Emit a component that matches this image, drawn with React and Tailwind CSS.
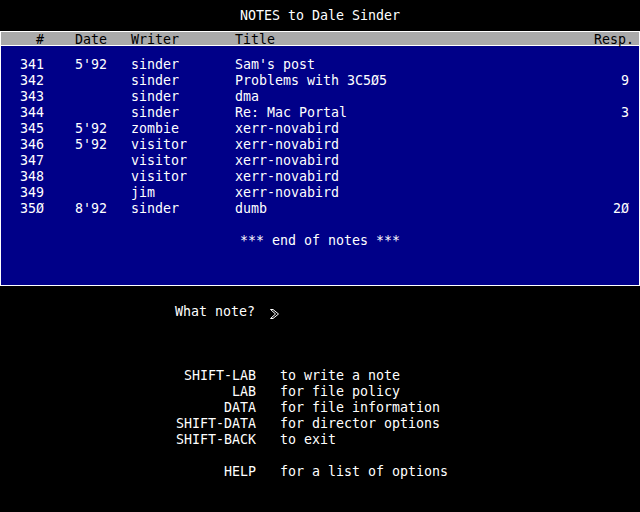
const notes = [
  { num: '341', date: "5'92", writer: 'sinder', title: "Sam's post", resp: '' },
  { num: '342', date: '', writer: 'sinder', title: 'Problems with 3C5Ø5', resp: '9' },
  { num: '343', date: '', writer: 'sinder', title: 'dma', resp: '' },
  { num: '344', date: '', writer: 'sinder', title: 'Re: Mac Portal', resp: '3' },
  { num: '345', date: "5'92", writer: 'zombie', title: 'xerr-novabird', resp: '' },
  { num: '346', date: "5'92", writer: 'visitor', title: 'xerr-novabird', resp: '' },
  { num: '347', date: '', writer: 'visitor', title: 'xerr-novabird', resp: '' },
  { num: '348', date: '', writer: 'visitor', title: 'xerr-novabird', resp: '' },
  { num: '349', date: '', writer: 'jim', title: 'xerr-novabird', resp: '' },
  { num: '35Ø', date: "8'92", writer: 'sinder', title: 'dumb', resp: '2Ø' },
];

const keys = [
  { key: 'SHIFT-LAB', desc: 'to write a note' },
  { key: 'LAB', desc: 'for file policy' },
  { key: 'DATA', desc: 'for file information' },
  { key: 'SHIFT-DATA', desc: 'for director options' },
  { key: 'SHIFT-BACK', desc: 'to exit' },
  { key: '', desc: '' },
  { key: 'HELP', desc: 'for a list of options' },
];

function Arrow() {
  return (
    <svg width="10" height="11" viewBox="0 0 10 11" className="ml-[15px] mt-[5px]">
      <path d="M0.5 0.5 L3 0.5 L8.5 5 L3 9.5 L0.5 9.5 L5.5 5 Z" fill="none" stroke="white" strokeWidth="1" />
    </svg>
  );
}

export default function App() {
  return (
    <div className="w-[640px] h-[512px] bg-black text-white overflow-hidden font-['DejaVu_Sans_Mono','Liberation_Mono',monospace] text-[13.3px] leading-4 whitespace-pre">
      {/* Title */}
      <div className="h-[31px] pt-[8px] text-center">NOTES to Dale Sinder</div>

      {/* Notes panel */}
      <div className="border border-white">
        <div className="h-[14px] leading-4 bg-[#aaaaaa] text-black border-b border-white flex">
          <span className="w-[43px] text-right">#</span>
          <span className="w-[56px] ml-[31px]">Date</span>
          <span className="w-[104px]">Writer</span>
          <span className="flex-1">Title</span>
          <span className="pr-[5px]">Resp.</span>
        </div>
        <div className="h-[239px] bg-[#000088] pt-[11px]">
          {notes.map(n => (
            <div key={n.num} className="flex h-4">
              <span className="w-[43px] text-right">{n.num}</span>
              <span className="w-[56px] ml-[31px]">{n.date}</span>
              <span className="w-[104px]">{n.writer}</span>
              <span className="flex-1">{n.title}</span>
              <span className="pr-[10px]">{n.resp}</span>
            </div>
          ))}
          <div className="h-4" />
          <div className="text-center">*** end of notes ***</div>
        </div>
      </div>

      {/* Prompt */}
      <div className="mt-[18px] pl-[175px] flex items-start h-4">
        <span>What note?</span>
        <Arrow />
      </div>

      {/* Key options */}
      <div className="mt-[48px]">
        {keys.map((k, i) => (
          <div key={i} className="flex h-4">
            <span className="w-[256px] text-right">{k.key}</span>
            <span className="ml-[24px]">{k.desc}</span>
          </div>
        ))}
      </div>
    </div>
  );
}
